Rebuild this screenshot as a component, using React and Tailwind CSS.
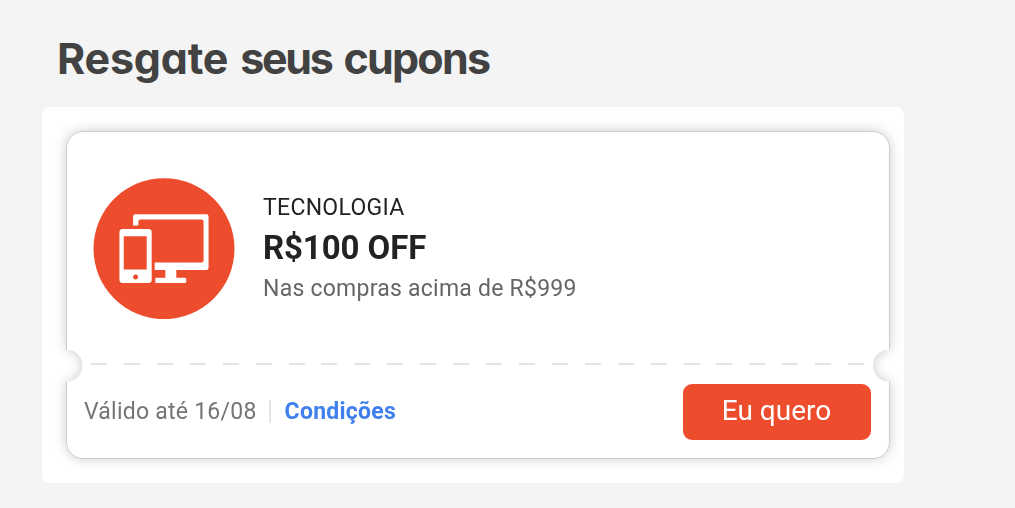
import React from 'react';

const coupon = {
  category: 'TECNOLOGIA',
  discount: 'R$100 OFF',
  minimum: 'Nas compras acima de R$999',
  validity: 'Válido até 16/08',
};

const DevicesIcon = () => (
  <svg viewBox="40 38 426 424" className="w-[142px] h-[141px] shrink-0" aria-hidden="true">
    <circle cx="253" cy="250.5" r="212" fill="#ee4d2d" />
    {/* Monitor */}
    <path
      fill="#fff"
      d="M160 181V154q0-7 7-7H380q7 0 7 7V308q0 7-7 7H290V338H315q5 0 5 5V349q0 5-5 5H227V338H257V315H225V292H366q6 0 6-6V169q0-6-6-6H182q-6 0-6 6V181Z"
    />
    {/* Phone */}
    <path
      fill="#fff"
      fillRule="evenodd"
      d="M129 191H206q10 0 10 10V344q0 10-10 10H129q-10 0-10-10V201q0-10 10-10ZM132 213V313H201V213ZM167.500 328a7.500 7.500 0 1 0 .01 0Z"
    />
  </svg>
);

const CouponCard = ({ category, discount, minimum, validity }) => {
  return (
    <div className="[filter:drop-shadow(0_0_6px_rgba(0,0,0,0.2))]">
      {/* The mask cuts the round notches on both sides */}
      <div className="flex flex-col w-[824px] h-[328px] rounded-[17px] border border-[#cbcbcb] bg-white [mask-clip:border-box] [mask-origin:border-box] [mask-image:radial-gradient(circle_at_0.5px_234.5px,transparent_15.5px,black_16.5px),radial-gradient(circle_at_823px_234.5px,transparent_15.5px,black_16.5px)] [mask-composite:intersect]">
        <div className="flex items-center h-[231px] pl-[26px] pt-[2px]">
          <DevicesIcon />
          <div className="ml-7 whitespace-nowrap">
            <p className="text-[23px] leading-8 tracking-[0.3px] text-[#222]">{category}</p>
            <p className="mt-1 text-[33px] leading-10 font-bold tracking-[-0.1px] text-[#222]">{discount}</p>
            <p className="mt-[5px] text-[23px] leading-8 tracking-[0.24px] text-[#666]">{minimum}</p>
          </div>
        </div>

        <div className="ml-6 w-[774px] h-[2px] shrink-0 bg-[repeating-linear-gradient(to_right,#e4e4e4_0_16px,transparent_16px_32.92px)]" />

        <div className="flex items-center justify-between flex-1 pl-[17px] pr-[18.5px]">
          <div className="flex items-center whitespace-nowrap text-[23px] leading-8">
            <span className="tracking-[0.24px] text-[#757575]">{validity}</span>
            <span className="w-0.5 h-[23px] ml-3 mr-[14px] bg-[#e4e4e4]" />
            <a href="#" className="font-bold tracking-[0.25px] text-[#4080ee]">Condições</a>
          </div>
          <button type="button" className="w-[188px] h-14 pb-0.5 rounded-[9px] bg-[#ee4d2d] text-[28px] text-white whitespace-nowrap">
            Eu quero
          </button>
        </div>
      </div>
    </div>
  );
};

const App = () => {
  return (
    <main className="w-[1015px] h-[508px] overflow-hidden pl-[42px] bg-[#f4f4f4] font-['Roboto',sans-serif]">
      <h1 className="h-[107px] pl-[15px] pt-[30px] font-['Inter',sans-serif] text-[43px] leading-[56px] font-bold tracking-[-0.2px] text-[#424242] whitespace-nowrap [font-feature-settings:'cv11']">
        Resgate{' '}
        <span className="ml-0.5 tracking-[-2.3px]">seus</span>{' '}
        <span className="ml-0.5 tracking-[-1.8px]">cupons</span>
      </h1>
      <section className="w-[862px] h-[376px] pl-6 pt-6 rounded-lg bg-white overflow-hidden">
        <CouponCard {...coupon} />
      </section>
    </main>
  );
};

export default App;
